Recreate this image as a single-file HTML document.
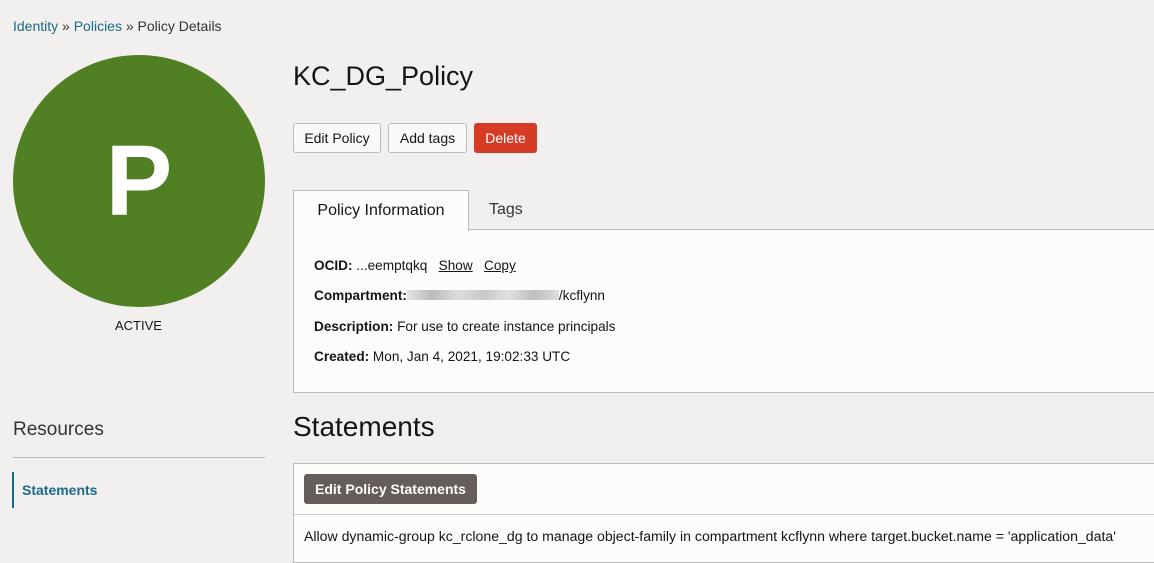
<!DOCTYPE html>
<html><head><style>
body{margin:0;width:1154px;height:557px;overflow:hidden;background:#f1f0ee;font-family:"Liberation Sans",sans-serif;color:#161513;position:relative}
.a{position:absolute}
.bc{left:13px;top:18px;font-size:14px;color:#333}
.bc a{color:#1a6a8a;text-decoration:none}
.circle{left:13px;top:55px;width:252px;height:252px;border-radius:50%;background:#507f24;color:#fff;font-size:100px;font-weight:bold;text-align:center;line-height:252px}
.btn{top:123px;height:30px;border:1px solid #bbb;border-radius:3px;background:#f9f9f8;font-size:14px;line-height:28px;padding:0 10px;box-sizing:border-box}
.lbl{font-weight:bold}
.i{font-size:13.6px}
</style></head><body>
<div class="a bc"><a>Identity</a> » <a>Policies</a> » Policy Details</div>
<div class="a circle">P</div>
<div class="a" style="left:115px;top:318px;font-size:13px">ACTIVE</div>
<div class="a" style="left:293px;top:61px;font-size:27px">KC_DG_Policy</div>
<div class="a btn" style="left:293px;width:88px;padding:0;text-align:center">Edit Policy</div>
<div class="a btn" style="left:388px;width:79px;padding:0;text-align:center">Add tags</div>
<div class="a btn" style="left:474px;width:63px;padding:0;text-align:center;background:#d63b25;border-color:#d63b25;color:#fff">Delete</div>
<div class="a" style="left:293px;top:229px;width:870px;height:164px;background:#fcfcfb;border:1px solid #bbb;box-sizing:border-box"></div>
<div class="a" style="left:293px;top:190px;width:176px;height:41px;background:#fcfcfb;border:1px solid #bbb;border-bottom:none;box-sizing:border-box;font-size:16px;text-align:center;line-height:40px">Policy Information</div>
<div class="a" style="left:489px;top:201px;font-size:16px;color:#333">Tags</div>
<div class="a i" style="left:314px;top:258px"><span class="lbl">OCID:</span> ...eemptqkq &nbsp; <u>Show</u> &nbsp; <u>Copy</u></div>
<div class="a i" style="left:314px;top:288px"><span class="lbl">Compartment:</span><span style="display:inline-block;width:152px;height:10px;background:linear-gradient(90deg,#e4e4e4,#bbb,#ddd,#c8c8c8,#e0e0e0,#bfbfbf,#ddd)"></span>/kcflynn</div>
<div class="a i" style="left:314px;top:319px"><span class="lbl">Description:</span> For use to create instance principals</div>
<div class="a i" style="left:314px;top:349px"><span class="lbl">Created:</span> Mon, Jan 4, 2021, 19:02:33 UTC</div>
<div class="a" style="left:13px;top:419px;font-size:19px;color:#333">Resources</div>
<div class="a" style="left:13px;top:457px;width:252px;height:1px;background:#bbb"></div>
<div class="a" style="left:12px;top:472px;width:2px;height:36px;background:#1a6a8a"></div>
<div class="a" style="left:22px;top:482px;font-size:14px;font-weight:bold;color:#1a6a8a">Statements</div>
<div class="a" style="left:293px;top:411px;font-size:28px">Statements</div>
<div class="a" style="left:293px;top:463px;width:870px;height:100px;background:#fcfcfb;border:1px solid #bbb;box-sizing:border-box"></div>
<div class="a" style="left:304px;top:474px;width:173px;height:30px;background:#655d59;border-radius:3px;color:#fff;font-size:14px;font-weight:bold;text-align:center;line-height:30px">Edit Policy Statements</div>
<div class="a" style="left:294px;top:514px;width:860px;height:1px;background:#ccc"></div>
<div class="a" style="left:304px;top:528px;font-size:14.1px">Allow dynamic-group kc_rclone_dg to manage object-family in compartment kcflynn where target.bucket.name = 'application_data'</div>
</body></html>
